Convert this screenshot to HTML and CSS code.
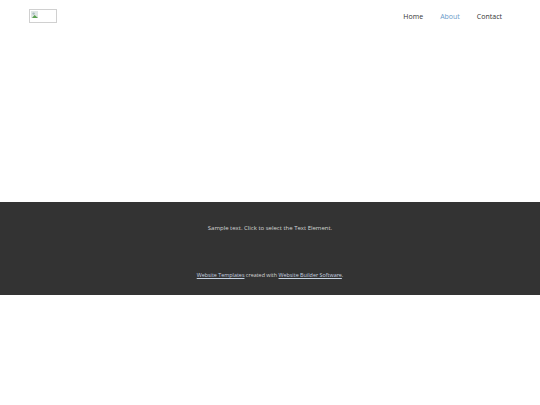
FILE: index.html
```html
<!DOCTYPE html>
<html>
<head>
<meta charset="utf-8">
<link rel="stylesheet" href="styles.css">
</head>
<body>
<header class="header">
  <div class="logo">
    <svg class="broken" width="8" height="8" viewBox="0 0 8 8"><rect x="0" y="0" width="7" height="7" fill="#dfe6e4"/><path d="M1 7 L3.5 4 L7 7 Z" fill="#5aa050"/><circle cx="2.6" cy="2.6" r="1.2" fill="#a9bcc0"/></svg>
  </div>
  <nav class="nav">
    <a class="nav-link">Home</a>
    <a class="nav-link active">About</a>
    <a class="nav-link">Contact</a>
  </nav>
</header>
<main class="hero"></main>
<footer class="footer">
  <p class="footer-text">Sample text. Click to select the Text Element.</p>
  <p class="credits"><a class="ulink">Website Templates</a> created with <a class="ulink">Website Builder Software</a>.</p>
</footer>
</body>
</html>
```

FILE: styles.css
```css
html, body {
  margin: 0;
  padding: 0;
  background: #ffffff;
  font-family: "Open Sans", "Liberation Sans", sans-serif;
}
.header {
  height: 34px;
  display: flex;
  align-items: flex-start;
  justify-content: space-between;
  padding: 0 38px 0 29px;
}
.logo {
  margin-top: 9px;
  width: 26px;
  height: 12px;
  border: 1px solid #d0d0d0;
  position: relative;
}
.broken {
  position: absolute;
  left: 1px;
  top: 1px;
}
.nav {
  display: flex;
  gap: 17px;
  margin-top: 12px;
  padding-left: 1px;
}
.nav-link {
  font-size: 7px;
  line-height: 10px;
  color: #333333;
}
.nav-link.active {
  color: #6b9bc9;
}
.hero {
  height: 168px;
}
.footer {
  background: #333333;
  height: 93px;
  display: flex;
  flex-direction: column;
  align-items: center;
  padding-top: 21px;
  box-sizing: border-box;
}
.footer-text {
  margin: 0;
  font-size: 6px;
  line-height: 10px;
  color: #d6d6d6;
}
.credits {
  margin: 38px 0 0 0;
  font-size: 5.4px;
  line-height: 8px;
  color: #d6d6d6;
}
.ulink {
  color: #c6d2e0;
  text-decoration: underline;
}
```
